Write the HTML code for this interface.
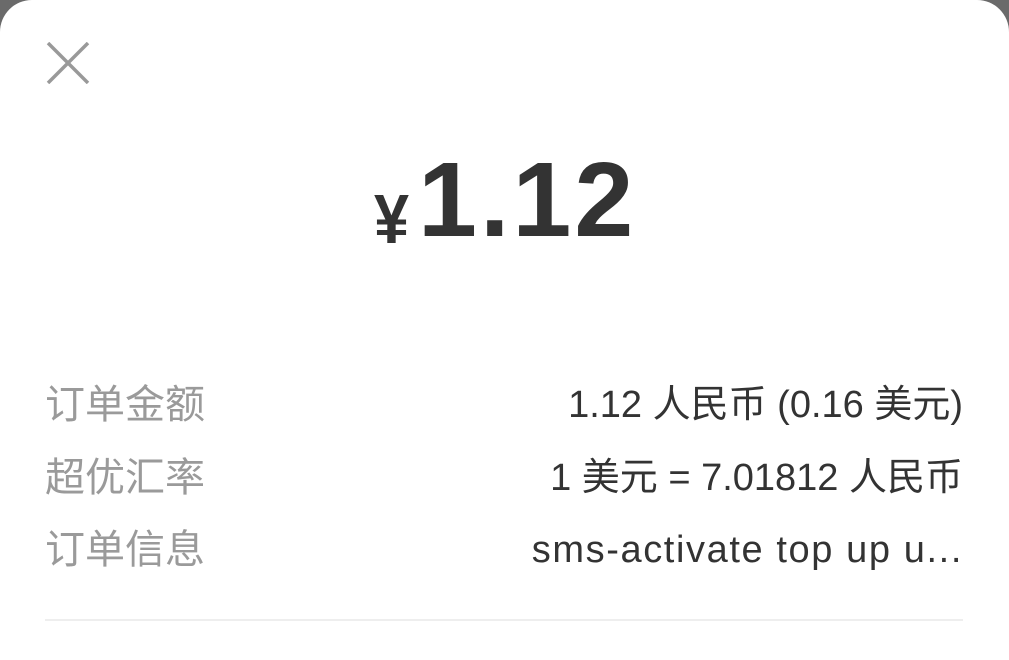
<!DOCTYPE html>
<html><head><meta charset="utf-8"><style>
html,body{margin:0;padding:0;width:1009px;height:626px;overflow:hidden;background:#6a6a6a;}
.card{position:absolute;left:0;top:0;width:1009px;height:660px;background:#fff;border-radius:32px 32px 0 0;}
.x{position:absolute;left:46px;top:42px;}
.yen{position:absolute;left:374px;top:184px;font:bold 70px "Liberation Sans",sans-serif;color:#333;transform:scaleX(0.9);transform-origin:left top;line-height:1;}
.num{position:absolute;left:418px;top:147px;font:bold 106px "Liberation Sans",sans-serif;color:#333;letter-spacing:3px;line-height:1;}
.row{position:absolute;left:45px;width:918px;height:50px;font-family:"Liberation Sans","Noto Sans CJK SC",sans-serif;}
.lab{position:absolute;left:0;top:0;font-size:40px;color:#9a9a9a;line-height:50px;}
.val{position:absolute;right:0;top:0;font-size:38px;color:#333;line-height:50px;white-space:nowrap;}
.line{position:absolute;left:45px;top:619px;width:918px;height:2px;background:#eeeeee;}
</style></head><body>
<div class="card">
<svg class="x" width="44" height="42" viewBox="0 0 44 42"><path d="M2 1 L42 41 M42 1 L2 41" stroke="#999" stroke-width="3.5" fill="none"/></svg>
<div class="yen">¥</div>
<div class="num">1.12</div>
<div class="row" style="top:380px"><span class="lab">订单金额</span><span class="val">1.12 人民币 (0.16 美元)</span></div>
<div class="row" style="top:453px"><span class="lab">超优汇率</span><span class="val">1 美元 = 7.01812 人民币</span></div>
<div class="row" style="top:525px"><span class="lab">订单信息</span><span class="val" style="letter-spacing:1.6px">sms-activate top up u...</span></div>
<div class="line"></div>
</div>
</body></html>
